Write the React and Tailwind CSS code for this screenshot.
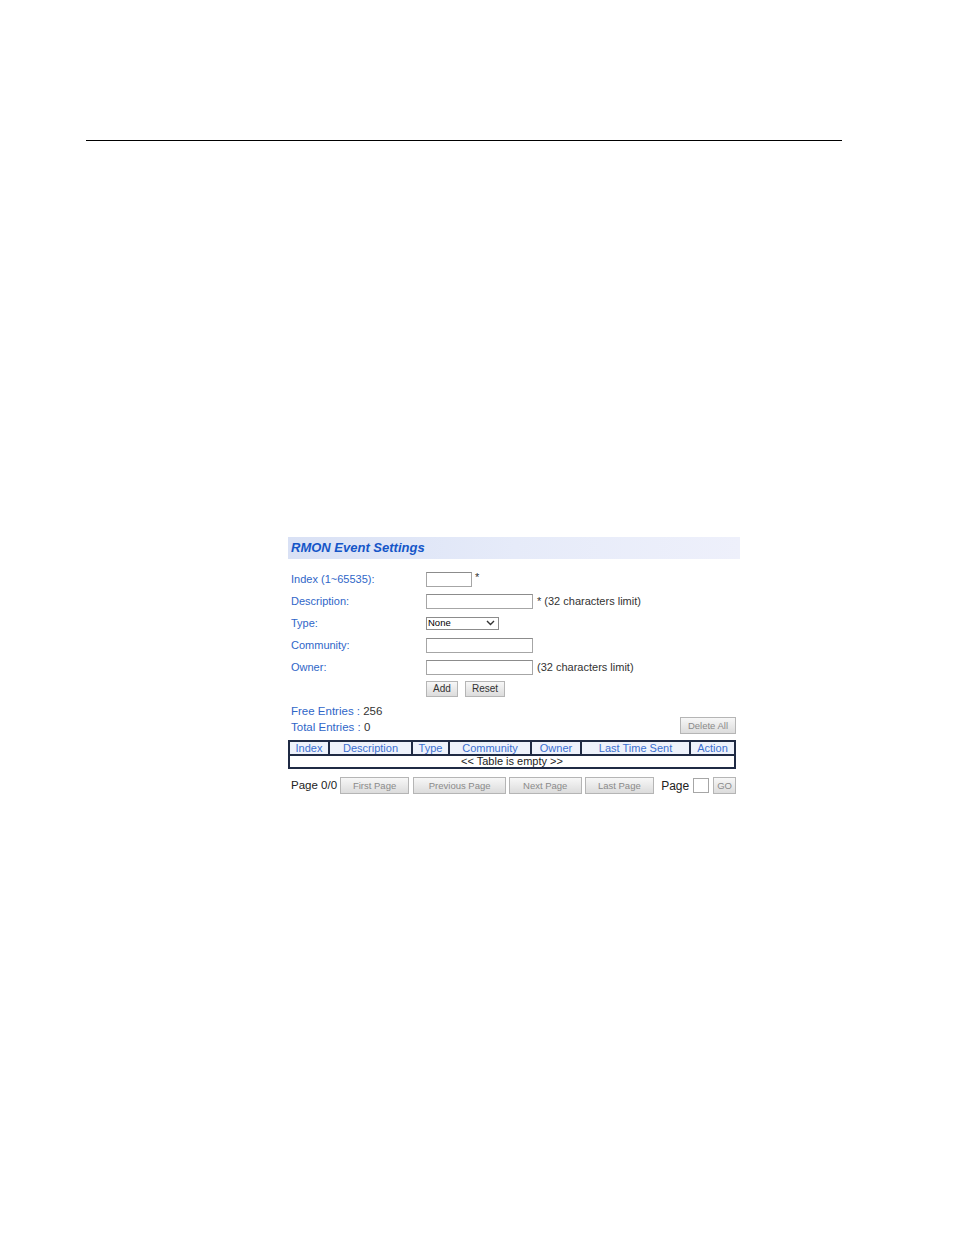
import React from "react";

const font = { fontFamily: '"Liberation Sans", Arial, sans-serif' };

function Btn({ children, className = "" }) {
  return (
    <div
      className={
        "flex items-center justify-center border border-[#b5b5b5] bg-gradient-to-b from-[#f7f7f7] to-[#dcdcdc] text-[9.5px] text-[#8a8a8a] leading-none " +
        className
      }
    >
      {children}
    </div>
  );
}

function Row({ label, children }) {
  return (
    <div className="flex items-center h-[22px]">
      <div className="w-[138px] pl-[3px] text-[11px] text-[#2f66c8]">{label}</div>
      <div className="flex items-center">{children}</div>
    </div>
  );
}

function Input({ w }) {
  return <div className={"h-[15px] border border-[#a6a6a6] border-t-[#8c8c8c] bg-white " + w}></div>;
}

export default function App() {
  const cols = [
    ["Index", "w-[40px]"],
    ["Description", "w-[83px]"],
    ["Type", "w-[37px]"],
    ["Community", "w-[82px]"],
    ["Owner", "w-[50px]"],
    ["Last Time Sent", "w-[109px]"],
    ["Action", "flex-1"],
  ];
  return (
    <div className="w-[954px] h-[1235px] bg-white overflow-hidden" style={font}>
      <div className="pt-[140px] pl-[86px]">
        <div className="h-px w-[756px] bg-black"></div>
      </div>
      <div className="ml-[288px] mt-[396px] w-[452px]">
        <div className="h-[22px] flex items-center pl-[3px] bg-gradient-to-r from-[#d9e1f5] via-[#e6ebf9] to-[#eef0fb]">
          <span className="text-[13px] font-bold italic text-[#1556c8]">RMON Event Settings</span>
        </div>
        <div className="mt-[9px]">
          <Row label="Index (1~65535):">
            <Input w="w-[46px]" />
            <span className="ml-[3px] text-[11px] text-[#333] -mt-[4px]">*</span>
          </Row>
          <Row label="Description:">
            <Input w="w-[107px]" />
            <span className="ml-[4px] text-[11px] text-[#333]">* (32 characters limit)</span>
          </Row>
          <Row label="Type:">
            <div className="w-[73px] h-[13px] border border-[#8c8c8c] bg-white flex items-center justify-between pl-[1px] pr-[3px]">
              <span className="text-[9.5px] text-black leading-none">None</span>
              <svg width="9" height="6" viewBox="0 0 9 6">
                <path d="M1 1 L4.5 4.5 L8 1" fill="none" stroke="#333" strokeWidth="1.4" />
              </svg>
            </div>
          </Row>
          <Row label="Community:">
            <Input w="w-[107px]" />
          </Row>
          <Row label="Owner:">
            <Input w="w-[107px]" />
            <span className="ml-[4px] text-[11px] text-[#333]">(32 characters limit)</span>
          </Row>
          <div className="flex items-center h-[22px] pl-[138px] gap-[7px]">
            <Btn className="w-[32px] h-[16px] !text-[10px] !text-[#333]">Add</Btn>
            <Btn className="w-[40px] h-[16px] !text-[10px] !text-[#333]">Reset</Btn>
          </div>
        </div>
        <div className="mt-[3px] flex justify-between items-end w-[448px]">
          <div className="pl-[3px] text-[11.5px] leading-[16px]">
            <div>
              <span className="text-[#2f66c8]">Free Entries : </span>
              <span className="text-[#333]">256</span>
            </div>
            <div>
              <span className="text-[#2f66c8]">Total Entries : </span>
              <span className="text-[#333]">0</span>
            </div>
          </div>
          <Btn className="w-[56px] h-[17px] mb-[1px]">Delete All</Btn>
        </div>
        <div className="mt-[5px] w-[448px] border-2 border-[#1f2a44]">
          <div className="flex h-[12px] bg-[#eef2fb]">
            {cols.map(([c, w], i) => (
              <div
                key={c}
                className={
                  "flex items-center justify-center text-[11px] leading-none text-[#3a6fd0] " +
                  w +
                  (i < cols.length - 1 ? " border-r-2 border-[#1f2a44]" : "")
                }
              >
                {c}
              </div>
            ))}
          </div>
          <div className="h-[13px] border-t-2 border-[#1f2a44] flex items-center justify-center text-[11px] leading-none text-[#222]">
            &lt;&lt; Table is empty &gt;&gt;
          </div>
        </div>
        <div className="mt-[8px] flex items-center h-[17px] w-[448px]">
          <span className="pl-[3px] w-[52px] text-[11.5px] text-[#222]">Page 0/0</span>
          <Btn className="w-[70px] h-[17px]">First Page</Btn>
          <Btn className="ml-[4px] w-[93px] h-[17px]">Previous Page</Btn>
          <Btn className="ml-[3px] w-[73px] h-[17px]">Next Page</Btn>
          <Btn className="ml-[3px] w-[70px] h-[17px]">Last Page</Btn>
          <span className="ml-[7px] text-[12px] text-[#222]">Page</span>
          <div className="ml-[4px] w-[16px] h-[15px] border border-[#a6a6a6] bg-white"></div>
          <Btn className="ml-[4px] w-[23px] h-[17px]">GO</Btn>
        </div>
      </div>
    </div>
  );
}
